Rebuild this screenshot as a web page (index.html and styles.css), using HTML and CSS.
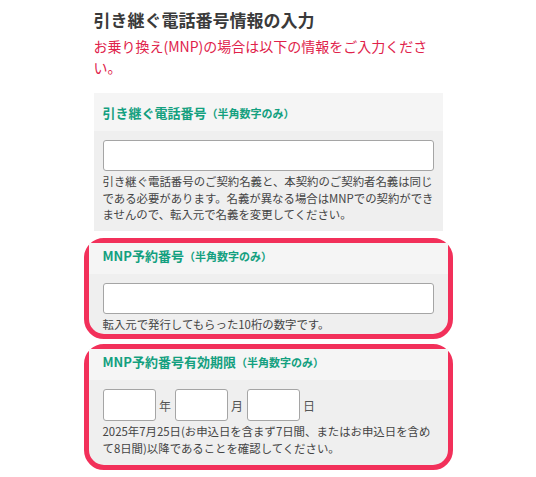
FILE: index.html
```html
<!DOCTYPE html>
<html lang="ja">
<head>
    <meta charset="UTF-8">
    <meta name="viewport" content="width=device-width, initial-scale=1.0">
    <title>引き継ぐ電話番号情報の入力</title>
    <link rel="stylesheet" href="styles.css">
</head>
<body>
    <div class="container">
        <h2 class="section-title">引き継ぐ電話番号情報の入力</h2>
        <p class="lead">お乗り換え(MNP)の場合は以下の情報をご入力ください。</p>

        <!-- 電話番号 -->
        <div class="field">
            <div class="field-head">
                <label class="field-label">引き継ぐ電話番号<small>（半角数字のみ）</small></label>
            </div>
            <div class="field-body">
                <input class="text-input" type="text">
                <p class="note">引き継ぐ電話番号のご契約名義と、本契約のご契約者名義は同じである必要があります。名義が異なる場合はMNPでの契約ができませんので、転入元で名義を変更してください。</p>
            </div>
        </div>

        <!-- 予約番号 -->
        <div class="field is-marked">
            <div class="field-head">
                <label class="field-label">MNP予約番号<small>（半角数字のみ）</small></label>
            </div>
            <div class="field-body">
                <input class="text-input" type="text">
                <p class="note">転入元で発行してもらった10桁の数字です。</p>
            </div>
        </div>

        <!-- 有効期限 -->
        <div class="field is-marked is-last">
            <div class="field-head">
                <label class="field-label">MNP予約番号有効期限<small>（半角数字のみ）</small></label>
            </div>
            <div class="field-body">
                <div class="date-row">
                    <input class="date-input" type="text">
                    <span class="unit">年</span>
                    <input class="date-input" type="text">
                    <span class="unit">月</span>
                    <input class="date-input" type="text">
                    <span class="unit">日</span>
                </div>
                <p class="note">2025年7月25日(お申込日を含まず7日間、またはお申込日を含めて8日間)以降であることを確認してください。</p>
            </div>
        </div>
    </div>
</body>
</html>
```

FILE: styles.css
```css
body {
    margin: 0;
    padding: 0;
    font-family: "Noto Sans CJK JP", "Noto Sans", sans-serif;
    color: #333;
    background-color: #fff;
}
.container {
    width: 349px;
    margin: 0 auto;
    padding-top: 8px;
}
.section-title {
    margin: 0;
    font-size: 17px;
    line-height: 24px;
    font-weight: bold;
    color: #3a3a3a;
}
.lead {
    margin: 4px 0 15px;
    font-size: 14px;
    line-height: 21px;
    color: #e0224a;
}
.field {
    background-color: #efefef;
    margin-bottom: 7px;
}
.field-head {
    background-color: #f5f5f5;
    padding: 11px 9px 9px;
}
.field-label {
    display: block;
    font-size: 13px;
    line-height: 18px;
    font-weight: bold;
    color: #13a07f;
}
.field-label small {
    font-size: 11px;
}
.field-body {
    padding: 9px 9px 8px;
}
.text-input {
    display: block;
    box-sizing: border-box;
    width: 100%;
    height: 31px;
    margin: 0;
    border: 1px solid #a5a5a5;
    border-radius: 3px;
    background-color: #fff;
}
.note {
    margin: 2px 0 0;
    font-size: 11.4px;
    line-height: 16.5px;
    color: #444;
}
.field.is-marked {
    margin: 0 -10px 5px;
    border: 5px solid #f2305a;
    border-radius: 20px;
}
.field.is-marked .field-head {
    padding: 4px 14px 9px;
}
.field.is-marked .field-body {
    padding: 9px 14px 2px;
}
.field.is-last .field-body {
    padding-bottom: 9px;
}
.date-row {
    display: flex;
    align-items: center;
}
.date-input {
    box-sizing: border-box;
    width: 53px;
    height: 32px;
    margin: 0;
    border: 1px solid #a5a5a5;
    border-radius: 3px;
    background-color: #fff;
}
.unit {
    width: 19px;
    text-align: center;
    font-size: 12px;
    color: #555;
}
```
